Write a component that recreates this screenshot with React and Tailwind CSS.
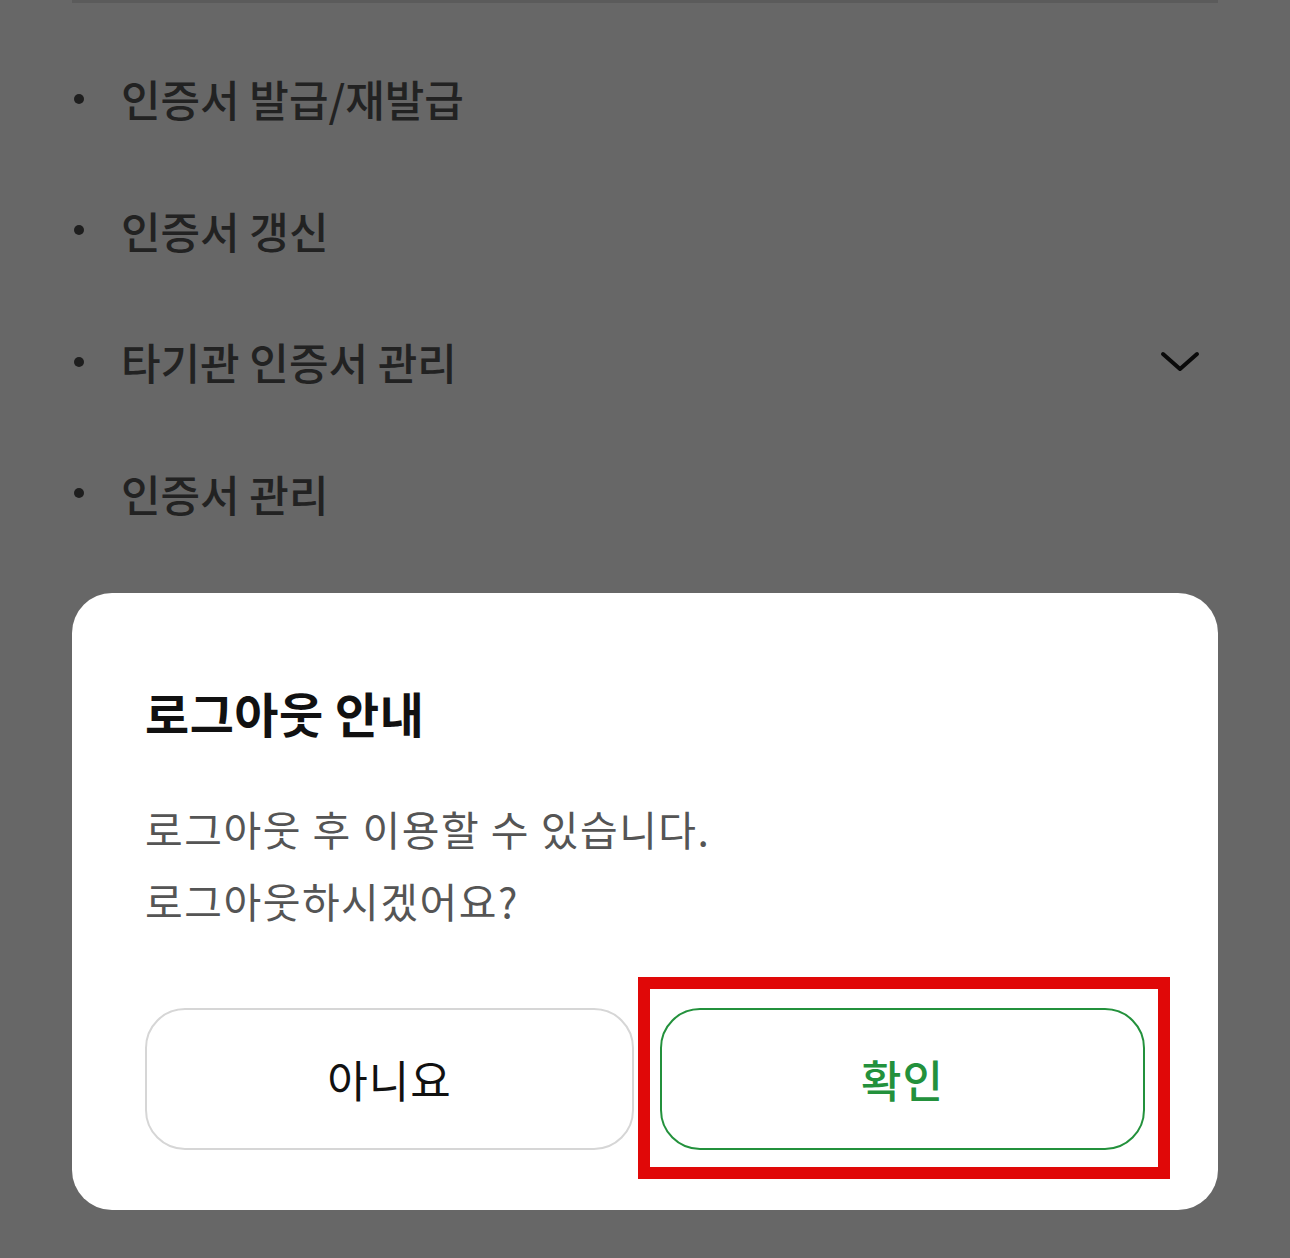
import React from 'react';

const menuItems = [
  { label: '인증서 발급/재발급' },
  { label: '인증서 갱신' },
  { label: '타기관 인증서 관리', expandable: true },
  { label: '인증서 관리' },
  { label: '인증서 삭제' },
];

const fontStack = { fontFamily: '"Noto Sans CJK KR", "Noto Sans", sans-serif' };

const ChevronDown = () => (
  <svg width="40" height="24" viewBox="0 0 40 24" fill="none">
    <path d="M3 4 L20 19 L37 4" stroke="#0a0a0a" strokeWidth="4" strokeLinecap="round" strokeLinejoin="round" />
  </svg>
);

const App = () => {
  return (
    <div className="relative w-[1290px] h-[1258px] overflow-hidden bg-[#676767]" style={fontStack}>
      {/* page behind the dim */}
      <div className="mx-[72px] border-t-[3px] border-[#5b5b5b] pt-[30px]">
        <ul>
          {menuItems.map((item) => (
            <li key={item.label} className="flex h-[131.5px] items-center">
              <span className="ml-[2px] h-[10px] w-[10px] rounded-full bg-[#1e1e1e]" />
              <span className="ml-[37px] text-[43px] font-medium text-[#222] leading-none">{item.label}</span>
              {item.expandable && (
                <span className="ml-auto mr-[18px] flex">
                  <ChevronDown />
                </span>
              )}
            </li>
          ))}
        </ul>
      </div>

      {/* Logout dialog */}
      <div className="absolute left-[72px] top-[593px] w-[1146px] rounded-[40px] bg-white px-[73px] pt-[89px] pb-[60px]">
        <h2 className="text-[48px] font-bold leading-[60px] tracking-[0.5px] text-[#111]">로그아웃 안내</h2>
        <p className="mt-[50px] text-[41px] leading-[72px] tracking-[1.5px] text-[#555]">
          로그아웃 후 이용할 수 있습니다.
          <br />
          로그아웃하시겠어요?
        </p>
        <div className="mt-[72px] flex gap-[26px]">
          <button className="flex h-[142px] flex-1 items-center justify-center rounded-[40px] border-2 border-[#d6d6d6] bg-white text-[44px] tracking-[1px] text-[#111]">
            아니요
          </button>
          <div className="relative flex-1">
            <button className="flex h-[142px] w-full items-center justify-center rounded-[40px] border-2 border-[#23913c] bg-white text-[44px] font-medium tracking-[1px] text-[#23913c]">
              확인
            </button>
            <div className="pointer-events-none absolute left-[-22px] right-[-25px] top-[-31px] bottom-[-29px] border-[12px] border-[#e00808]" />
          </div>
        </div>
      </div>
    </div>
  );
};

export default App;
